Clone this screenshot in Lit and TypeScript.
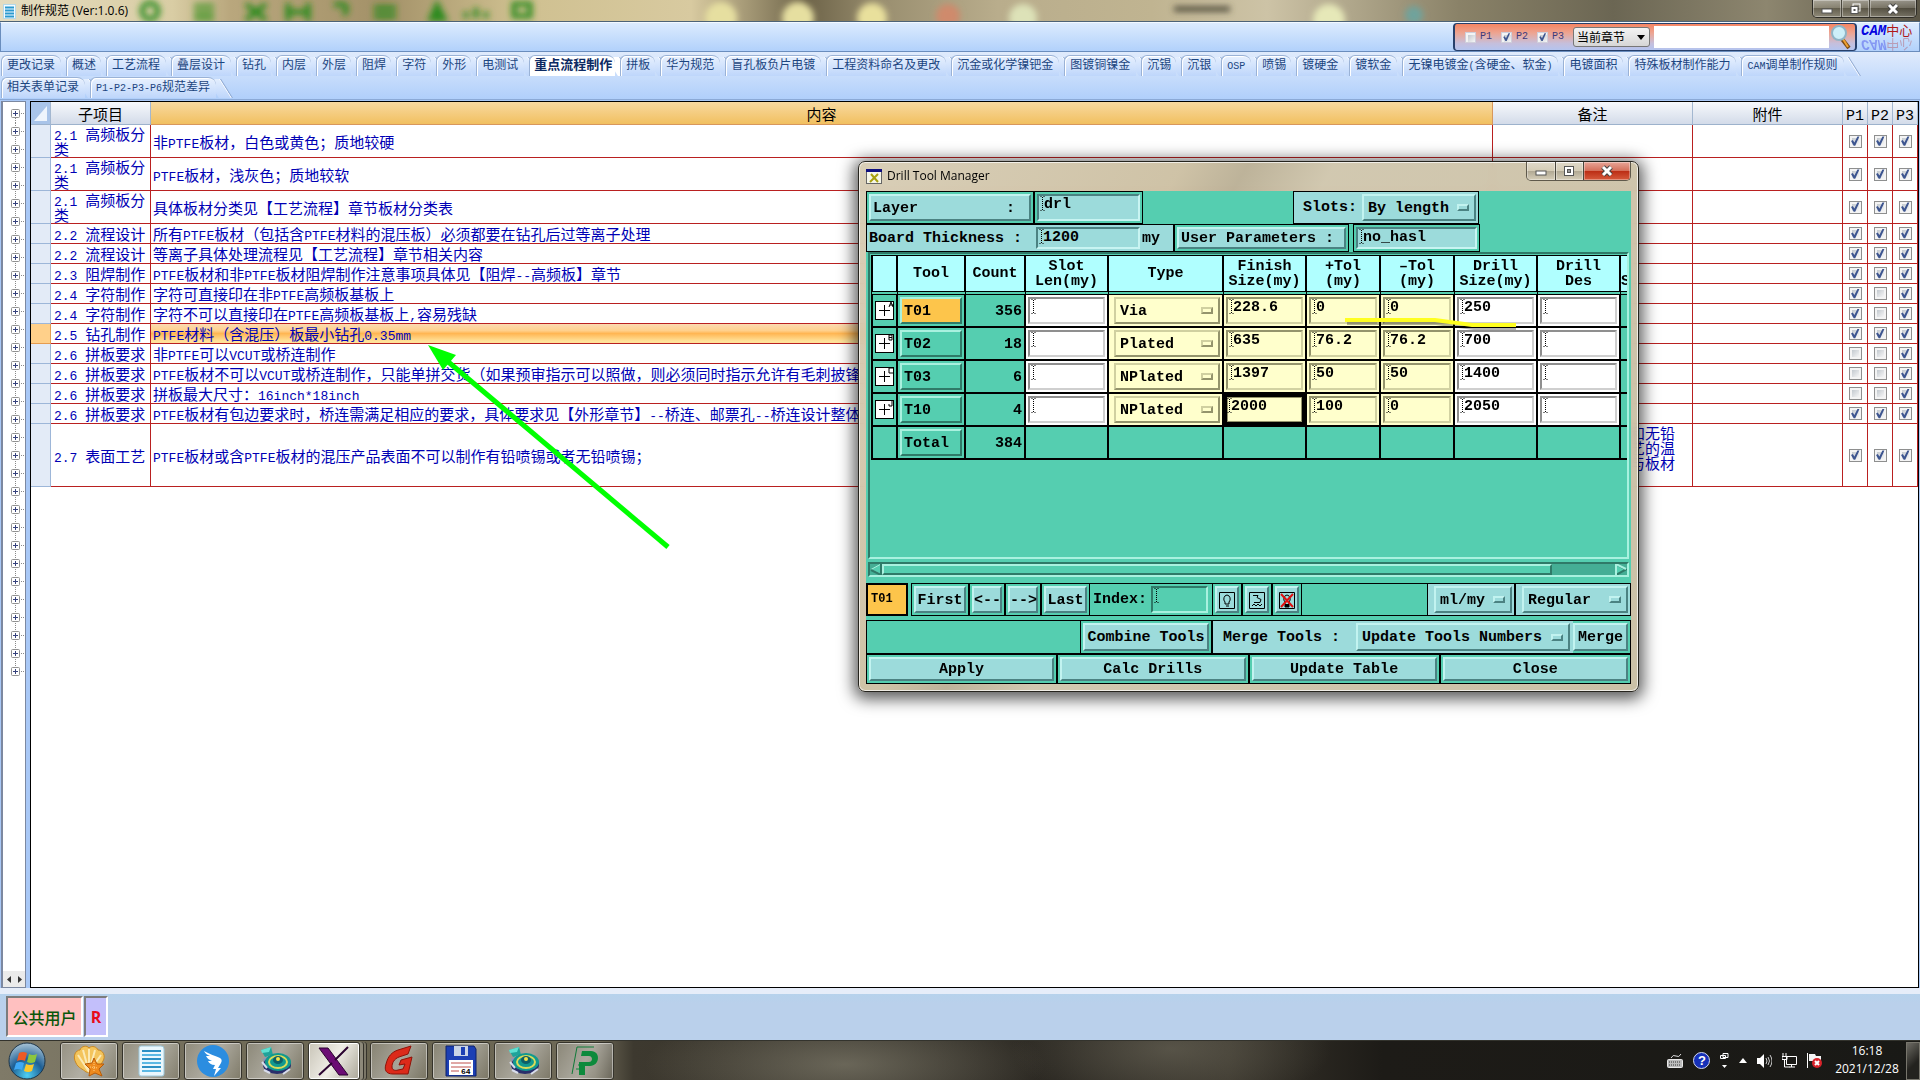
import { LitElement, html, svg, css, nothing } from "lit";
import { customElement } from "lit/decorators.js";
import { classMap } from "lit/directives/class-map.js";

/** Wraps runs of Latin characters so that they take the narrow monospaced face. */
const mixed = (text: string) =>
  text.split(/([\x20-\x7e]+)/).filter(Boolean).map((part) =>
    /^[\x20-\x7e]/.test(part) ? html`<span class="latin">${part}</span>` : part
  );

const TABS: string[][] = [
  ["更改记录", "概述", "工艺流程", "叠层设计", "钻孔", "内层", "外层", "阻焊", "字符", "外形", "电测试",
    "重点流程制作", "拼板", "华为规范", "盲孔板负片电镀", "工程资料命名及更改", "沉金或化学镍钯金", "图镀铜镍金",
    "沉锡", "沉银", "OSP", "喷锡", "镀硬金", "镀软金", "无镍电镀金(含硬金、软金)", "电镀面积",
    "特殊板材制作能力", "CAM调单制作规则"],
  ["相关表单记录", "P1-P2-P3-P6规范差异"],
];
const ACTIVE_TAB = "重点流程制作";

interface Rule { item: string; text: string; p: string; size?: string; note?: string[]; current?: boolean }

const RULES: Rule[] = [
  { item: "2.1 高频板分类", text: "非PTFE板材，白色或黄色；质地较硬", p: "111", size: "mid" },
  { item: "2.1 高频板分类", text: "PTFE板材，浅灰色；质地较软", p: "111", size: "mid" },
  { item: "2.1 高频板分类", text: "具体板材分类见【工艺流程】章节板材分类表", p: "111", size: "mid" },
  { item: "2.2 流程设计", text: "所有PTFE板材（包括含PTFE材料的混压板）必须都要在钻孔后过等离子处理", p: "111" },
  { item: "2.2 流程设计", text: "等离子具体处理流程见【工艺流程】章节相关内容", p: "111" },
  { item: "2.3 阻焊制作", text: "PTFE板材和非PTFE板材阻焊制作注意事项具体见【阻焊--高频板】章节", p: "111" },
  { item: "2.4 字符制作", text: "字符可直接印在非PTFE高频板基板上", p: "101" },
  { item: "2.4 字符制作", text: "字符不可以直接印在PTFE高频板基板上,容易残缺", p: "101" },
  { item: "2.5 钻孔制作", text: "PTFE材料（含混压）板最小钻孔0.35mm", p: "111", current: true },
  { item: "2.6 拼板要求", text: "非PTFE可以VCUT或桥连制作", p: "001" },
  { item: "2.6 拼板要求", text: "PTFE板材不可以VCUT或桥连制作，只能单拼交货（如果预审指示可以照做，则必须同时指示允许有毛刺披锋", p: "001" },
  { item: "2.6 拼板要求", text: "拼板最大尺寸：16inch*18inch", p: "001" },
  { item: "2.6 拼板要求", text: "PTFE板材有包边要求时，桥连需满足相应的要求，具体要求见【外形章节】--桥连、邮票孔--桥连设计整体", p: "111" },
  { item: "2.7 表面工艺", text: "PTFE板材或含PTFE板材的混压产品表面不可以制作有铅喷锡或者无铅喷锡；", p: "111", size: "tall", note: ["和无铅", "艺的温", "与板材"] },
];

interface Drill { tool: string; mark: string; count: number; type: string; finish: string; plus: string; minus: string; size: string; focus?: boolean }

const DRILLS: Drill[] = [
  { tool: "T01", mark: "M14 6 L16 1 L18 6 M15 4 H18", count: 356, type: "Via", finish: "228.6", plus: "0", minus: "0", size: "250" },
  { tool: "T02", mark: "M14 1 V6 H17 V1 Z M14 3.5 H17", count: 18, type: "Plated", finish: "635", plus: "76.2", minus: "76.2", size: "700" },
  { tool: "T03", mark: "M18 1 H14 V6 H18", count: 6, type: "NPlated", finish: "1397", plus: "50", minus: "50", size: "1400" },
  { tool: "T10", mark: "M17 1 V6 H14 V4", count: 4, type: "NPlated", finish: "2000", plus: "100", minus: "0", size: "2050", focus: true },
];

const HEADS = [["", ""], ["Tool"], ["Count"], ["Slot", "Len(my)"], ["Type"], ["Finish", "Size(my)"], ["+Tol", "(my)"],
  ["–Tol", "(my)"], ["Drill", "Size(my)"], ["Drill", "Des"], ["", "S"]];

const caret = html`<svg class="caret" width="3" height="15" viewBox="0 0 3 15" aria-hidden="true">
  <path d="M1.5 1V14" stroke="#000" stroke-dasharray="1 1"/><path d="M-.5 .5h1m2 0h1M-.5 14.5h1m2 0h1" stroke="#000"/></svg>`;

const field = (label: string, value = "", cls = "") => html`<span class="field ${cls}">${caret}<input aria-label=${label} .value=${value} /></span>`;

const option = (label: string, value: string, cls = "") => html`<span class="option bevel ${cls}">
  <select aria-label=${label}><option>${value}</option></select><i class="bar"></i></span>`;

const machine = svg`
  <path d="M2 5l10-3 2 8-8 2z" fill="#1fa39a"/><path d="M2 5l10-3-2 5-7 1z" fill="#5fe0d2"/><path d="M4 14l7-4 2 3-8 4z" fill="#8d93b8"/>
  <ellipse cx="18" cy="20" rx="14" ry="9" fill="#2a2f6b"/><ellipse cx="19" cy="17" rx="13" ry="9" fill="#11998f"/>
  <ellipse cx="19" cy="17" rx="9" ry="6" fill="none" stroke="#d9dc5a" stroke-width="2"/>
  <ellipse cx="19" cy="15" rx="5" ry="4" fill="#0d5f68"/><circle cx="19" cy="14" r="2" fill="#f4e24a"/>
  <path d="M3 17l5 6M5 25l6 3M24 29l7-5" stroke="#d7dceb" stroke-width="2"/>`;

const APPS: { name: string; art: unknown; active?: boolean }[] = [
  { name: "贝壳", art: svg`<path d="M3 18C-1 11 3 5 7 5c1-4 7-5 9-2 3-3 8-1 9 2 5 0 8 6 5 11-2 5-7 8-9 12l-8-1C10 24 5 23 3 18z" fill="#f3c45c" stroke="#c98822"/>
    <path d="M16 27L5 10M16 27L10 5M16 27V4M16 27L22 5M16 27L28 10" stroke="#fbe9b4" stroke-width="2"/>
    <path d="M21 13l3 6 7 0-5 5 3 7-7-3-6 3 1-7-5-5 7-1z" fill="#ee8a1d" stroke="#b85c08"/><path d="M21 17v9M17 22l8 1" stroke="#ffd084" stroke-dasharray="1 1"/>` },
  { name: "文档", art: svg`<path d="M4 3q0-2 2-2h20q3 0 3 3v25q0 2-2 2H6q-2 0-2-2z" fill="#eaf7fd" stroke="#9cc8dc"/>
    <path d="M7 6h19M7 14h19M7 22h19" stroke="#2b8fc4" stroke-width="2"/><path d="M7 10h19M7 18h19M7 26h19" stroke="#5bb8e4" stroke-width="2"/>` },
  { name: "钉钉", art: svg`<circle cx="16" cy="16" r="16" fill="#2b8de0"/>
    <path d="M7 6c5 3 12 5 16 7 2 1 2 3 1 5l-3 5h3l-7 8 2-7h-3l2-4c-4 0-6-2-7-4l4 0c-3-1-5-3-6-5l4 0c-3-1-5-3-6-5z" fill="#fff"/>` },
  { name: "Drill A", art: machine },
  { name: "X", active: true, art: svg`<path d="M1 3h9l20 27h-9z" fill="#6b0c74" stroke="#2a0330"/><path d="M30 2L17 15M14 18L1 30" stroke="#2a0330" stroke-width="2"/>` },
  { name: "G", art: svg`<path d="M28 1l-3 8-9 3c-5 2-7 6-7 10 0 3 3 4 6 3l5-1 2-5-6 1 2-5 11-3-4 17H10c-7 0-9-4-7-10C5 11 9 7 15 5z" fill="#dc2a1a" stroke="#8e1208"/>` },
  { name: "Save 64", art: svg`<path d="M1 1h28l2 3v27H1z" fill="#1c3fb4" stroke="#0c2169"/><path d="M9 1h14v10H9z" fill="#c9d3e6"/><path d="M16 2h4v8h-4z" fill="#1c3fb4"/>
    <path d="M4 15h24v15H4z" fill="#fff"/><path d="M6 18h20M6 22h20M6 26h8" stroke="#c0504d"/><text x="16" y="29" font-size="8" font-family="Liberation Mono" font-weight="700">64</text>` },
  { name: "Drill B", art: machine },
  { name: "P", art: svg`<path d="M3 29L8 2h17" fill="none" stroke="#0f7a38" stroke-width="1"/><path d="M13 6h9c10 0 9 15-1 15h-5v9h-6v-13h10c4 0 4-6 0-6h-8z" fill="#0d8a3c"/><path d="M9 20h3M7 24h5" stroke="#0d8a3c"/>` },
];

@customElement("app-root")
export class AppRoot extends LitElement {
  static styles = css`
    :host { display: flex; flex-direction: column; position: relative; min-height: 100vh; box-sizing: border-box; overflow: hidden;
      font: 12px/14px "Liberation Sans", "Noto Sans CJK SC", sans-serif; color: #000; background: #bad0eb; }
    *, *::before, *::after { box-sizing: border-box; }
    button, input, select { font: inherit; color: inherit; margin: 0; padding: 0; border: 0; border-radius: 0; background: none; min-width: 0; outline: 0; }
    select { appearance: none; }
    svg { display: block; flex: none; }

    .titlebar { position: relative; display: flex; align-items: flex-start; height: 22px; overflow: hidden; border-bottom: 1px solid #4d6377;
      background: linear-gradient(90deg, #e5dcc0 0, #d9cda4 9%, #b9a77d 12%, #a39168 20%, #cfc090 27%, #d8caa0 36%, #6e6449 42%, #9a8f70 46%, #b9ad8c 52%, #c0b491 60%, #cdc3a6 66%, #8a8268 76%, #6b6653 84%, #8d866f 92%, #5a5546); }
    .titlebar .haze { position: absolute; inset: 0; }
    .titlebar h1 { position: relative; margin: 0; flex: 1; padding: 2px 5px 0 4px; font: 12px/18px "Open Sans", "Noto Sans CJK SC", sans-serif; }
    .titlebar .doc { position: relative; margin: 4px 0 0 3px; }
    .winkeys { position: relative; display: flex; border: 1px solid #2e2c26; border-top: 0; border-radius: 0 0 5px 5px; overflow: hidden; height: 18px; }
    .winkeys button { display: flex; align-items: center; justify-content: center; width: 28px; box-shadow: inset 0 0 0 1px rgba(255,255,255,.35);
      background: linear-gradient(rgba(255,255,255,.35), rgba(255,255,255,.1) 50%, rgba(0,0,0,.15) 50%, rgba(255,255,255,.15)); border-left: 1px solid #4a473d; }
    .winkeys button:first-child { border-left: 0; }
    .winkeys button:last-child { width: 47px; }
    .winkeys.outer { margin-right: 3px; }

    .ribbon { display: flex; justify-content: flex-end; height: 30px; border: 1px solid #6a8dbd; border-top-color: #f3f9ff; background: linear-gradient(#dcebfe, #b2d1fb); }
    .search { display: flex; align-items: center; width: 404px; padding: 0 4px 0 10px; border: 2px solid #27406b; border-width: 1px 2px; border-radius: 4px;
      background: linear-gradient(#f58562, #eda592 35%, #c5bfdc 75%, #b4c4ef); color: #3b3a7c; }
    .search label { display: flex; align-items: center; gap: 4px; width: 36px; font: 10px/14px "Liberation Mono", monospace; }
    .search .scope { position: relative; display: flex; width: 77px; height: 20px; border: 1px solid #777; border-radius: 3px; background: linear-gradient(#f4f4f4, #d6d6d6); color: #000; font: 12px/18px "Noto Sans CJK SC", sans-serif; align-items: center; }
    .scope select { flex: 1; padding-left: 3px; }
    .scope svg { margin-right: 4px; }
    .search .query { flex: 1; height: 22px; margin: 0 2px 0 4px; background: #fff; }
    .brand { display: block; width: 62px; padding-left: 4px; font: italic 700 14px/14px "Liberation Mono", "Noto Sans CJK SC", monospace; color: #0606e0; white-space: nowrap; }
    .brand b { font: 13px/14px "Noto Sans CJK SC", sans-serif; color: #b01818; }
    .brand .mirror { display: block; height: 14px; transform: scaleY(-1); opacity: .3; }

    .tabs { height: 48px; padding: 2px 0 0 1px; border-bottom: 1px solid #8ba9d6; background: linear-gradient(#e0ebfc, #b0cffb); }
    .tabrow { display: flex; height: 22px; }
    .tab { position: relative; flex: none; text-align: left; padding: 0 11px 2px 6px; height: 22px; color: #1c4580; font: 12px/18px "Noto Sans CJK SC", sans-serif; white-space: nowrap; isolation: isolate; }
    .tab.narrow { padding-right: 10px; }
    .tab.on { font-size: 13px; font-weight: 700; color: #0d2a63; padding-left: 5px; padding-right: 8px; }
    .tab .edge { position: absolute; left: 0; right: 5px; top: 1px; bottom: 0; z-index: -1; border: 1px solid #9ab2d6; border-bottom: 0; border-radius: 6px 8px 0 0; box-shadow: inset 1px 1px 0 #fff; background: linear-gradient(#e8f1fe, #bed6fb); border-right: 0; }
    .tab .slant { position: absolute; top: 3px; bottom: 0; right: -6px; width: 14px; z-index: -1; border-right: 1px solid #8fa8cf; transform: skewX(32deg); background: linear-gradient(#e3eefe, #bed6fb); box-shadow: inset -1px 0 0 #fff; }
    .tab.on .edge, .tab.on .slant { background: #fff; }
    .tab .latin { font: 10px/1px "Liberation Mono", monospace; }

    .work { flex: 1; display: grid; grid-template-columns: 25px minmax(0, 1fr); gap: 4px; padding: 1px 1px 0 1px; background: #a9c8f6; }
    .tree { display: flex; flex-direction: column; padding-top: 3px; background: #fff; border: 1px solid #7c88a0; border-width: 1px 1px 1px 2px; }
    .tree button { height: 18px; }
    .tree .scroll { display: flex; justify-content: space-around; align-items: center; height: 16px; margin-top: auto; background: #ebebeb; }
    .grid { border: 1px solid #000; background: #fff; }

    .rules { width: 100%; border-collapse: separate; border-spacing: 0; table-layout: fixed; color: #0000b4; font: 15px/15px "Noto Sans CJK SC", sans-serif; }
    .rules .latin { font: 13px/1px "Liberation Mono", monospace; white-space: pre; }
    .rules .w20 { width: 20px; } .rules .w25 { width: 25px; } .rules .w100 { width: 100px; } .rules .w150 { width: 150px; } .rules .w200 { width: 200px; }
    .rules th { height: 23px; padding: 0; font-weight: 400; color: #000; border-right: 1px solid #a3b7d0; border-bottom: 1px solid #9db2cc; background: linear-gradient(#f7f9fc, #d3dbe9); }
    .rules th .latin { font-size: 15px; }
    .rules th.hot { background: linear-gradient(#f8d9a0, #f1c060); border-color: #d8975c; }
    .rules th.corner { background: #a9c4e9; }
    .rules td { height: 20px; padding: 0 0 0 2px; border-right: 1px solid #b92020; border-bottom: 1px solid #b92020; white-space: nowrap; }
    .rules .mid td { height: 33px; }
    .rules .tall td { height: 63px; }
    .rules td.item { padding-left: 3px; white-space: normal; }
    .rules td.stub { background: #e3ebf7; border-color: #9db6d8; }
    .rules td.tick { padding: 0; }
    .rules td.note { text-align: right; padding: 0 17px 15px 0; }
    .rules .current .stub { background: #ffd08a; border-color: #e59c50; }
    .rules .current .body { background: linear-gradient(#fbdab2, #ffd08c 35%, #ffb653 50%, #ffe29a 90%); }
    .rules .tick input { display: block; margin: 0 auto; }
    input[type="checkbox"] { appearance: none; flex: none; position: relative; width: 13px; height: 13px; border: 1px solid #8e8f8f; background: linear-gradient(135deg, #c3c9cf, #f6f6f6) 2px 2px / 7px 7px no-repeat #f4f4f4; }
    .search input[type="checkbox"] { width: 11px; height: 11px; border-color: #cfcfdc; }
    input[type="checkbox"]:checked::before { content: ""; position: absolute; inset: 0; background: #3d5590; clip-path: polygon(14% 50%, 30% 42%, 44% 64%, 72% 8%, 90% 8%, 52% 94%, 38% 94%); }

    .status { display: flex; gap: 1px; height: 52px; padding: 2px 0 3px 6px; border-top: 6px solid #e6edf9; background: linear-gradient(#b6d2ec, #bad0eb 20%); }
    .status span { display: flex; align-items: center; justify-content: center; border: 2px solid; border-color: #7c7c7c #fff #fff #7c7c7c; height: 41px; }
    .status .user { width: 77px; background: #ffc0c0; color: #0a560a; font: 500 16px/24px "Noto Sans CJK SC", sans-serif; }
    .status .role { width: 24px; background: #c3bffb; color: #e80c1c; font: 700 16px/24px "Open Sans", sans-serif; }

    .taskbar { display: flex; align-items: center; gap: 4px; height: 40px; padding-left: 8px; border-top: 1px solid #33332d; color: #fff;
      background: radial-gradient(ellipse 200px 60px at 44% 60%, rgba(150,146,128,.55), transparent), radial-gradient(ellipse 160px 60px at 61% 20%, rgba(110,106,92,.6), transparent),
      linear-gradient(90deg, #7f7a68, #68634f 20%, #6f6a58 31%, #3d392f 33%, #2b2822 55%, #39352c 64%, #1d1b17 72%, #191916 100%); }
    .orb { width: 36px; height: 38px; margin-right: 12px; display: flex; align-items: center; }
    .app { display: flex; align-items: center; justify-content: center; width: 58px; height: 38px; border: 1px solid #35332b; border-radius: 3px;
      box-shadow: inset 0 0 0 1px rgba(255,255,255,.45); background: linear-gradient(120deg, rgba(255,255,255,.2), rgba(255,255,255,.42) 50%, rgba(255,255,255,.1)); }
    .app.active { width: 52px; margin-right: 6px; background: linear-gradient(120deg, #c9c5b8, #efede6 50%, #aaa697); box-shadow: inset 0 0 0 1px #fff, 3px 0 0 #8d897a, 4px 0 0 #35332b, 6px 0 0 #7a7667, 7px 0 0 #35332b; }
    .tray { display: flex; align-items: center; gap: 10px; margin-left: auto; }
    .clock { display: flex; flex-direction: column; align-items: center; width: 70px; font: 12px/18px "Open Sans", sans-serif; padding-bottom: 1px; }
    .peek { width: 14px; height: 38px; border: 1px solid #77756c; background: linear-gradient(135deg, #6d6b64, #23221e 60%); }

    .dialog { position: absolute; left: 858px; top: 161px; width: 781px; padding: 0 7px 7px; border: 1px solid #26241e; border-radius: 7px;
      background: linear-gradient(120deg, rgba(214,203,178,.93), rgba(203,190,160,.93) 30%, rgba(184,173,146,.93) 36%, rgba(206,196,170,.93) 44%, rgba(199,188,160,.93)); backdrop-filter: blur(5px);
      box-shadow: inset 0 0 0 1px rgba(255,255,255,.7), 0 3px 16px 4px rgba(0,0,0,.65); }
    .caption { display: flex; height: 29px; align-items: flex-start; }
    .caption h2 { flex: 1; margin: 0; padding: 5px; font: 12px/18px "Open Sans", sans-serif; }
    .caption > svg { margin-top: 7px; }
    .caption .winkeys { border-color: #5f594b; height: 19px; }
    .caption .winkeys button:last-child { background: linear-gradient(#e8a597, #d4705b 48%, #bb2c14 50%, #d65a3c); }

    .client { display: flex; flex-direction: column; background: #55ceb0; font: 700 15px/15px "Liberation Mono", monospace; }
    .line { display: flex; }
    .cell { display: flex; align-items: stretch; padding: 2px; border: 1px solid #000; }
    .cell.blue { background: #9cdbdb; }
    .grow { flex: 1; }
    .bevel { border: 2px solid; border-color: #c2f3f0 #4b8282 #4b8282 #c2f3f0; background: #9cdbdb; }
    button.bevel { flex: 1; padding-top: 1px; text-align: center; white-space: pre; }
    button.start { text-align: left; padding-left: 2px; }
    button.between { display: flex; justify-content: space-between; align-items: center; padding: 1px 14px 0 2px; }
    .option { display: flex; align-items: center; padding: 0 5px 0 4px; }
    .option select { flex: 1; height: 17px; padding-top: 1px; }
    .bar { width: 12px; height: 7px; border: 2px solid; border-color: #c2f3f0 #4b8282 #4b8282 #c2f3f0; }
    .field { display: flex; flex: 1; align-items: flex-start; padding: 0 2px; border: 2px solid; border-color: #4b8282 #c8f4f2 #c8f4f2 #4b8282; background: #9cdbdb; }
    .field input { flex: 1; width: 0; height: 17px; }
    .caret { overflow: visible; }
    .label { align-self: center; white-space: pre; }

    .h33 { height: 33px; } .h28 { height: 28px; } .h34 { height: 34px; } .h30 { height: 30px; }
    .c-layer { width: 168px; } .c-drl { width: 109px; } .c-slots { width: 186px; margin-right: 152px; padding-left: 9px; justify-content: space-between; }
    .c-slots .option { width: 114px; }
    .c-board { width: 308px; padding-left: 2px; gap: 2px; } .c-board .label:first-child { width: 165px; }
    .c-board .field { flex: none; width: 104px; }
    .c-param { width: 175px; margin-right: 4px; } .c-hasl { width: 127px; }

    .sheet { height: 307px; margin: 0 2px; padding: 1px 0 0 1px; border: 2px solid; border-color: #2f7a68 #a9f1df #a9f1df #2f7a68; overflow: hidden; }
    .drills { width: 100%; border-collapse: separate; border-spacing: 0; table-layout: fixed; }
    .drills .a { width: 27px; } .drills .b { width: 68px; } .drills .c { width: 60px; } .drills .d { width: 83px; } .drills .e { width: 115px; } .drills .f { width: 74px; }
    .drills th { height: 40px; padding: 0; border-top: 1px solid #000; border-right: 2px solid #000; border-bottom: 4px double #000; background: #b0ffff padding-box; }
    .drills th:first-child, .drills td:first-child { border-left: 2px solid #000; }
    .drills th:last-child, .drills td:last-child { border-right: 0; }
    .drills td { height: 33px; padding: 0; border-right: 2px solid #000; border-bottom: 2px solid #000; }
    .pad { display: flex; height: 31px; padding: 2px; }
    .pad.num { justify-content: flex-end; align-items: center; padding: 1px 2px 0 0; }
    .pad.white { background: #fff; } .pad.cream { background: #ffffcc; }
    .pad.center { align-items: center; }
    .white .field { background: #fff; border-color: #8f8f8f #cfcfcf #cfcfcf #8f8f8f; }
    .cream .field { background: #ffffcc; border-color: #94946c #d2d2a2 #d2d2a2 #94946c; }
    .cream .option { flex: 1; margin: 0 0 0 3px; background: #ffffcc; border-color: #d0d0a0 #94946c #94946c #d0d0a0; }
    .cream .bar { border-color: #d0d0a0 #94946c #94946c #d0d0a0; }
    .pad.focus { padding: 0; } .pad.focus .field { border: 3px solid #000; padding: 1px; box-shadow: inset 0 0 0 1px #94946c; }
    .drills .bevel.tool { background: #55ceb0; border-color: #a9f1df #2f7a68 #2f7a68 #a9f1df; }
    .drills .bevel.tool.on { background: #fdc54b; }

    .hscroll { display: flex; align-items: center; height: 15px; margin: 3px 2px 6px; border: 2px solid; border-color: #2f7a68 #a9f1df #a9f1df #2f7a68; background: #45ae95; }
    .hscroll .thumb { height: 11px; width: 670px; border: 2px solid; border-color: #a9f1df #2f7a68 #2f7a68 #a9f1df; background: #55ceb0; }
    .hscroll .fill { flex: 1; }
    .current-tool { width: 42px; margin-right: 3px; padding: 7px 3px; background: #fdc54b; border: 2px solid #000; font-size: 12px; line-height: 15px; }
    .k1 { width: 58px; } .k2 { width: 36px; } .k3 { width: 49px; } .k4 { width: 30px; }
    .index { display: flex; width: 122px; padding: 2px 4px 2px 3px; border: solid #000; border-width: 1px 0; gap: 4px; }
    .index .field { background: #55ceb0; border-color: #2f7a68 #a9f1df #a9f1df #2f7a68; }
    .k4 .bevel { display: flex; align-items: center; justify-content: center; }
    .blank { border: solid #000; border-width: 1px 0; }
    .cell.k5 { width: 88px; padding-left: 6px; } .cell.k6 { width: 116px; padding-left: 6px; }
    .k5 .option, .k6 .option { flex: 1; }
    .row-d { margin-top: 4px; border-left: 1px solid #000; }
    .k7 { width: 132px; } .cell.k8 { width: 361px; padding: 2px 3px 2px 10px; border-right: 0; justify-content: space-between; } .k8 .option { width: 214px; } .cell.k9 { width: 58px; padding-left: 0; border-left: 0; }

    .ink { position: absolute; left: 0; top: 0; pointer-events: none; }
  `;

  private titlebar() {
    return html`<header class="titlebar">
      <svg class="haze" width="100%" height="22" aria-hidden="true">
        <defs><filter id="soft" x="-20%" y="-50%" width="140%" height="200%"><feGaussianBlur stdDeviation="3"/></filter></defs>
        <g filter="url(#soft)" fill="none" stroke="#2c8a1c" stroke-width="5">
          <circle cx="150" cy="11" r="8"/><path d="M194 6h20M194 13h20M194 19h20" stroke="#5b9c3a"/><path d="M246 4l20 16M266 4l-20 16"/>
          <path d="M288 3v18M308 3v18M288 12h20"/><path d="M334 5q18-4 10 10"/><path d="M374 8h22M374 16h22"/>
          <path d="M437 5l-6 14h13z" fill="#2c8a1c"/><path d="M466 18v-6M476 18v-10M486 18v-6"/><rect x="514" y="4" width="16" height="12"/>
        </g>
        <g filter="url(#soft)"><circle cx="721" cy="18" r="16" fill="#e6dfa0"/><circle cx="798" cy="18" r="16" fill="#e6dfa0"/><circle cx="872" cy="18" r="15" fill="#e9e09c"/>
          <circle cx="948" cy="16" r="12" fill="#cf8a6c"/><circle cx="1023" cy="18" r="14" fill="#dde2b8"/><path d="M1174 9h56" stroke="#4a4638" stroke-width="5"/>
          <circle cx="1329" cy="20" r="16" fill="#e6e8b8"/><circle cx="1414" cy="15" r="9" fill="#6fa39c"/></g>
      </svg>
      <svg class="doc" width="14" height="15" viewBox="0 0 14 15"><rect x=".5" y=".5" width="12" height="14" fill="#f4fbff" stroke="#b5d8e8"/><path d="M2 3.500h9M2 6.500h9M2 9.500h9M2 12.500h9" stroke="#2b9ad0" stroke-width="2"/></svg>
      <h1>制作规范 (Ver:1.0.6)</h1>
      ${this.winkeys("outer", true)}
    </header>`;
  }

  private winkeys(cls: string, restore: boolean) {
    return html`<div class="winkeys ${cls}">
      <button aria-label="最小化"><svg width="12" height="12"><rect x="1" y="6" width="10" height="4" fill="#fff" stroke="#555"/></svg></button>
      <button aria-label="最大化"><svg width="13" height="12">${restore
        ? svg`<rect x="4" y="1" width="7" height="7" fill="none" stroke="#fff" stroke-width="1"/><rect x="2" y="3.500" width="7" height="7" fill="#fff" stroke="#555"/><rect x="4.500" y="6" width="2" height="2" fill="#555"/>`
        : svg`<rect x="1.500" y="1.500" width="9" height="9" fill="#fff" stroke="#555"/><rect x="4.500" y="4.500" width="3" height="3" fill="#999" stroke="#555"/>`}</svg></button>
      <button aria-label="关闭"><svg width="14" height="12"><path d="M3 2l8 8M11 2l-8 8" stroke="#444" stroke-width="5"/><path d="M3 2l8 8M11 2l-8 8" stroke="#fff" stroke-width="3"/></svg></button>
    </div>`;
  }

  private ribbon() {
    return html`<div class="ribbon">
      <form class="search">
        <label><input type="checkbox" />P1</label><label><input type="checkbox" checked />P2</label><label><input type="checkbox" checked />P3</label>
        <span class="scope"><select aria-label="范围"><option>当前章节</option></select><svg width="8" height="5"><path d="M0 0h8l-4 5z"/></svg></span>
        <input class="query" aria-label="搜索" />
        <svg width="20" height="26" viewBox="0 0 20 26"><path d="M11 15l7 9" stroke="#7a4a14" stroke-width="4"/><path d="M12 15l5 8" stroke="#f0a030" stroke-width="2"/><circle cx="8" cy="9" r="7" fill="#cdeff8" stroke="#8fb4c6" stroke-width="2"/></svg>
      </form>
      <div class="brand">CAM<b>中心</b><span class="mirror" aria-hidden="true">CAM<b>中心</b></span></div>
    </div>`;
  }

  private tabs() {
    return html`<nav class="tabs">${TABS.map((row) => html`<div class="tabrow">${row.map((t) => html`
      <button class=${classMap({ tab: true, on: t === ACTIVE_TAB, narrow: t.length === 2 })}><i class="slant"></i><i class="edge"></i>${mixed(t)}</button>`)}</div>`)}</nav>`;
  }

  private tree() {
    return html`<aside class="tree">
      ${Array.from({ length: 32 }, (_, i) => html`<button aria-label="展开 ${i + 1}"><svg width="22" height="18" viewBox="0 0 22 18">
        <path d=${i === 0 ? "M12.500 9V18" : i === 31 ? "M12.500 0V9" : "M12.500 0V18"} stroke="#888" stroke-dasharray="1 1"/><path d="M12 8.500H22" stroke="#888" stroke-dasharray="1 1"/>
        <rect x="8.500" y="4.500" width="8" height="8" rx="1" fill="#fff" stroke="#919191"/><path d="M10 8.500h5M12.500 6v5" stroke="#35417c"/></svg></button>`)}
      <div class="scroll"><svg width="4" height="7"><path d="M4 0v7L0 3.500z" fill="#333"/></svg><svg width="4" height="7"><path d="M0 0v7l4-3.500z" fill="#333"/></svg></div>
    </aside>`;
  }

  private rules() {
    return html`<table class="rules">
      <colgroup><col class="w20"/><col class="w100"/><col/><col class="w200"/><col class="w150"/><col class="w25"/><col class="w25"/><col class="w25"/></colgroup>
      <thead><tr><th class="corner"><svg width="19" height="22"><path d="M3 19L16 4v15z" fill="#eef4fc"/></svg></th><th>子项目</th><th class="hot">内容</th><th>备注</th><th>附件</th>
        <th>${mixed("P1")}</th><th>${mixed("P2")}</th><th>${mixed("P3")}</th></tr></thead>
      <tbody>${RULES.map((r) => html`<tr class="${r.size ?? ""} ${r.current ? "current" : ""}">
        <td class="stub"></td><td class="item">${mixed(r.item)}</td><td class="body">${mixed(r.text)}</td>
        ${r.note ? html`<td class="note">${r.note.map((n, i) => html`${i ? html`<br/>` : nothing}${n}`)}</td>` : html`<td></td>`}<td></td>
        ${[...r.p].map((v, i) => html`<td class="tick"><input type="checkbox" aria-label="${r.item} P${i + 1}" ?checked=${v === "1"} /></td>`)}
      </tr>`)}</tbody></table>`;
  }

  private drills() {
    return html`<div class="sheet"><table class="drills">
      <colgroup>${["a", "b", "c", "d", "e", "d", "f", "f", "d", "d", ""].map((c) => html`<col class=${c}/>`)}</colgroup>
      <thead><tr>${HEADS.map((h) => html`<th>${h[0]}${h.length > 1 ? html`<br/>${h[1]}` : nothing}</th>`)}</tr></thead>
      <tbody>${DRILLS.map((d) => html`<tr>
        <td><div class="pad center"><svg width="19" height="19" viewBox="0 0 19 19"><rect x=".5" y=".5" width="18" height="18" fill="#fff" stroke="#000"/><path d="M4 9.500h11M9.500 4v11" stroke="#000"/><path d=${d.mark} fill="none" stroke="#000"/></svg></div></td>
        <td><div class="pad"><button class="bevel tool start ${d.tool === "T01" ? "on" : ""}">${d.tool}</button></div></td>
        <td><div class="pad num">${d.count}</div></td>
        <td><div class="pad white">${field(`${d.tool} slot length`)}</div></td>
        <td><div class="pad cream">${option(`${d.tool} type`, d.type)}</div></td>
        <td><div class="pad cream ${d.focus ? "focus" : ""}">${field(`${d.tool} finish size`, d.finish)}</div></td>
        <td><div class="pad cream">${field(`${d.tool} plus tolerance`, d.plus)}</div></td>
        <td><div class="pad cream">${field(`${d.tool} minus tolerance`, d.minus)}</div></td>
        <td><div class="pad white">${field(`${d.tool} drill size`, d.size)}</div></td>
        <td><div class="pad white">${field(`${d.tool} drill designation`)}</div></td><td></td></tr>`)}
        <tr><td></td><td><div class="pad"><button class="bevel tool start">Total</button></div></td><td><div class="pad num">384</div></td>
        ${Array.from({ length: 8 }, () => html`<td></td>`)}</tr></tbody></table></div>`;
  }

  private dialog() {
    const btn = (t: string) => html`<button class="bevel">${t}</button>`;
    return html`<section class="dialog" role="dialog" aria-label="Drill Tool Manager">
      <div class="caption"><svg width="16" height="15" viewBox="0 0 16 15"><rect x=".5" y=".5" width="15" height="14" fill="#f6f6e8" stroke="#666"/><path d="M0 1.500h16" stroke="#101080" stroke-width="3"/><path d="M5 5l7 8M12 5l-8 8" stroke="#a8a010" stroke-width="2"/></svg>
        <h2>Drill Tool Manager</h2>${this.winkeys("", false)}</div>
      <div class="client">
        <div class="line h33"><div class="cell c-layer"><button class="bevel between"><span>Layer</span><span>:</span></button></div>
          <div class="cell c-drl">${field("Layer", "drl")}</div><div class="grow"></div>
          <div class="cell blue c-slots"><span class="label">Slots:</span>${option("Slots", "By length")}</div></div>
        <div class="line h28"><div class="cell blue c-board"><span class="label">Board Thickness :</span>${field("Board Thickness", "1200")}<span class="label">my</span></div>
          <div class="cell c-param"><button class="bevel start">User Parameters :</button></div><div class="cell c-hasl">${field("User Parameters", "no_hasl")}</div></div>
        ${this.drills()}
        <div class="hscroll"><svg width="12" height="11"><path d="M11 0L1 5.500l10 5z" fill="#55ceb0" stroke="#a9f1df"/><path d="M11 0v11L1 6" fill="none" stroke="#2f7a68" stroke-width="2"/></svg><div class="thumb"></div><div class="fill"></div>
          <svg width="12" height="11"><path d="M1 0v11L11 5.500z" fill="#55ceb0" stroke="#2f7a68" stroke-width="2"/><path d="M1 11V0L11 5" fill="none" stroke="#a9f1df" stroke-width="2"/></svg></div>
        <div class="line h33"><div class="current-tool">T01</div><div class="cell k1">${btn("First")}</div><div class="cell k2">${btn("<--")}</div><div class="cell k2">${btn("-->")}</div><div class="cell k3">${btn("Last")}</div>
          <div class="index"><span class="label">Index:</span>${field("Index")}</div>
          <div class="cell k4"><button class="bevel" aria-label="Highlight"><svg width="16" height="17"><path d="M.5 .5h15v16H.5zM8 3a3.500 4 0 0 0-2 7v2h4v-2a3.500 4 0 0 0-2-7M7 14h3" fill="none" stroke="#000"/></svg></button></div>
          <div class="cell k4"><button class="bevel" aria-label="Zoom"><svg width="16" height="17"><path d="M.5 .5h15v16H.5zM4 3.500h5l-1 2 4 2-1 3H5M3 14l2-2 2 2 2-2 2 2 2-2" fill="none" stroke="#000"/></svg></button></div>
          <div class="cell k4"><button class="bevel" aria-label="Delete"><svg width="16" height="17"><path d="M.5 .5h15v16H.5zM8 3a3.500 4 0 0 0-2 7v5h4v-5a3.500 4 0 0 0-2-7" fill="none" stroke="#000"/><path d="M6 12h4v3H6z"/><path d="M2 2l12 13M14 2L2 15" stroke="#e01010" stroke-width="2"/></svg></button></div>
          <div class="grow blank"></div><div class="cell blue k5">${option("Units", "ml/my")}</div><div class="cell blue k6">${option("Mode", "Regular")}</div></div>
        <div class="line h34 row-d"><div class="grow blank"></div><div class="cell k7">${btn("Combine Tools")}</div>
          <div class="cell blue k8"><span class="label">Merge Tools :</span>${option("Merge Tools", "Update Tools Numbers")}</div><div class="cell k9">${btn("Merge")}</div></div>
        <div class="line h30">${["Apply", "Calc Drills", "Update Table", "Close"].map((t) => html`<div class="cell grow">${btn(t)}</div>`)}</div>
      </div></section>`;
  }

  private taskbar() {
    return html`<footer class="taskbar">
      <button class="orb" aria-label="开始"><svg width="38" height="38" viewBox="0 0 38 38"><defs><radialGradient id="orb" cx=".5" cy=".9" r=".9"><stop offset="0" stop-color="#4fd0f4"/><stop offset=".5" stop-color="#1d5f95"/><stop offset="1" stop-color="#a9c4d6"/></radialGradient></defs>
        <circle cx="19" cy="19" r="18" fill="url(#orb)" stroke="#1e3548"/><path d="M11 11q4-2 8 0l-2 8q-4-2-8 0z" fill="#ee5a24"/><path d="M21 12q4 2 8 0l-2 8q-4 2-8 0z" fill="#8cc63f"/><path d="M8 21q4-2 8 0l-2 7q-4-2-8 0z" fill="#3fa9f5"/><path d="M18 22q4 2 8 0l-2 7q-4 2-8 0z" fill="#fbc82c"/></svg></button>
      ${APPS.map((a) => html`<button class="app ${a.active ? "active" : ""}" aria-label=${a.name}><svg width="32" height="32" viewBox="0 0 32 32">${a.art}</svg></button>`)}
      <div class="tray">
        <svg width="16" height="16"><rect x=".5" y="6.500" width="15" height="8" rx="1" fill="#bbb" stroke="#e8e8e8"/><path d="M2 9h12M2 12h12" stroke="#333" stroke-dasharray="1 1"/><path d="M4 5q2-4 5-2t5-2" fill="none" stroke="#ddd"/></svg>
        <svg width="17" height="17"><circle cx="8.500" cy="8.500" r="8" fill="#1630b8" stroke="#d3d8ee"/><text x="5" y="13" font-size="13" font-weight="700" fill="#fff" font-family="Liberation Sans">?</text></svg>
        <svg width="9" height="18"><path d="M3 1.500h5v4H3zM.5 3.500h5v3h-5z" fill="#222" stroke="#fff"/><path d="M2 13h5l-2.500 3z" fill="#fff"/></svg>
        <svg width="8" height="5"><path d="M0 5h8L4 0z" fill="#fff"/></svg>
        <svg width="15" height="14"><path d="M0 4h3l4-4v14l-4-4H0z" fill="#fff"/><path d="M9 4q2 3 0 6M11 3q3 4 0 8M13 1q4 6 0 12" fill="none" stroke="#ccc"/></svg>
        <svg width="15" height="15"><path d="M4.500 3.500h10v8h-10zM7 14h6M9.500 11v3M1 0v3M4 0v3M0 3.500h5v3H0zM2.500 6v8h5" fill="none" stroke="#fff"/></svg>
        <svg width="15" height="15"><path d="M.5 0v15" stroke="#fff"/><path d="M2 1h6l1 2h5v5H2z" fill="#f4f4f4"/><circle cx="10" cy="10" r="5" fill="#d8232a"/><path d="M8 8l4 4M12 8l-4 4" stroke="#fff" stroke-width="2"/></svg>
        <div class="clock"><span>16:18</span><span>2021/12/28</span></div>
      </div>
      <button class="peek" aria-label="显示桌面"></button></footer>`;
  }

  render() {
    return html`${this.titlebar()}${this.ribbon()}${this.tabs()}
      <main class="work">${this.tree()}<div class="grid">${this.rules()}</div></main>
      <div class="status"><span class="user">公共用户</span><span class="role">R</span></div>
      ${this.taskbar()}${this.dialog()}
      <svg class="ink" width="1620" height="600" aria-hidden="true">
        <path d="M446 360L668 547" stroke="#00ff00" stroke-width="5"/><path d="M428 345L456 355L443 370Z" fill="#00ff00"/>
        <path d="M1347 323L1436 323L1474 328L1516 328" fill="none" stroke="rgba(0,0,0,.3)" stroke-width="4"/><path d="M1345 320L1435 320L1472 325L1516 325" fill="none" stroke="#ffff20" stroke-width="4"/>
      </svg>`;
  }
}
